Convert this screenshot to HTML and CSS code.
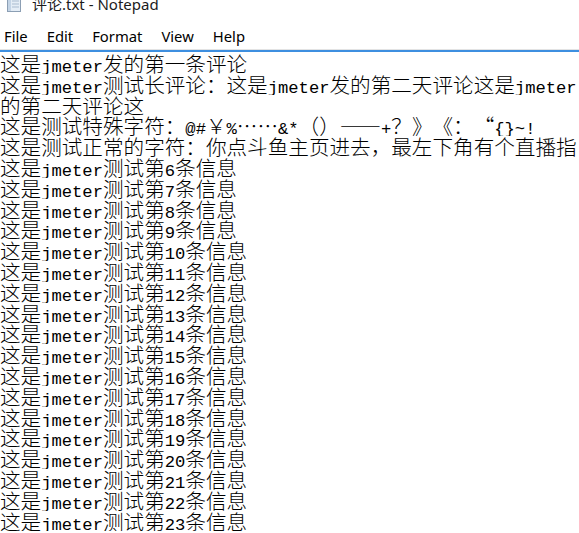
FILE: index.html
```
<!DOCTYPE html>
<html lang="zh-CN">
<head>
<meta charset="utf-8">
<title>评论.txt - Notepad</title>
<link rel="stylesheet" href="styles.css">
</head>
<body>
<div class="window">
  <div class="titlebar">
    <svg class="app-icon" width="18" height="18" viewBox="0 0 18 18">
      <rect x="2.5" y="1.5" width="13" height="15" fill="#e4edf6" stroke="#8c9fb4"/>
      <rect x="3" y="2" width="3" height="14" fill="#c3d4e6"/>
      <line x1="7" y1="6" x2="14" y2="6" stroke="#a9bbcf"/>
      <line x1="7" y1="9" x2="14" y2="9" stroke="#a9bbcf"/>
      <line x1="7" y1="12" x2="14" y2="12" stroke="#a9bbcf"/>
    </svg>
    <span class="title">评论.txt - Notepad</span>
  </div>
  <div class="menubar">
    <span class="menu">File</span>
    <span class="menu">Edit</span>
    <span class="menu">Format</span>
    <span class="menu">View</span>
    <span class="menu">Help</span>
  </div>
  <div class="editor">
    <div class="ln">这是<span class="l">jmeter</span>发的第一条评论</div>
    <div class="ln">这是<span class="l">jmeter</span>测试长评论：这是<span class="l">jmeter</span>发的第二天评论这是<span class="l">jmeter</span></div>
    <div class="ln">的第二天评论这</div>
    <div class="ln">这是测试特殊字符：<span class="l">@#</span>￥<span class="l">%</span>……<span class="l">&amp;*</span>（）——<span class="l">+</span><span class="fw">？</span><span class="fw">》</span><span class="fw">《</span><span class="fw">：</span><span class="fw fr">“</span><span class="l">{}~!</span></div>
    <div class="ln">这是测试正常的字符：你点斗鱼主页进去，最左下角有个直播指</div>
    <div class="ln">这是<span class="l">jmeter</span>测试第<span class="l">6</span>条信息</div>
    <div class="ln">这是<span class="l">jmeter</span>测试第<span class="l">7</span>条信息</div>
    <div class="ln">这是<span class="l">jmeter</span>测试第<span class="l">8</span>条信息</div>
    <div class="ln">这是<span class="l">jmeter</span>测试第<span class="l">9</span>条信息</div>
    <div class="ln">这是<span class="l">jmeter</span>测试第<span class="l">10</span>条信息</div>
    <div class="ln">这是<span class="l">jmeter</span>测试第<span class="l">11</span>条信息</div>
    <div class="ln">这是<span class="l">jmeter</span>测试第<span class="l">12</span>条信息</div>
    <div class="ln">这是<span class="l">jmeter</span>测试第<span class="l">13</span>条信息</div>
    <div class="ln">这是<span class="l">jmeter</span>测试第<span class="l">14</span>条信息</div>
    <div class="ln">这是<span class="l">jmeter</span>测试第<span class="l">15</span>条信息</div>
    <div class="ln">这是<span class="l">jmeter</span>测试第<span class="l">16</span>条信息</div>
    <div class="ln">这是<span class="l">jmeter</span>测试第<span class="l">17</span>条信息</div>
    <div class="ln">这是<span class="l">jmeter</span>测试第<span class="l">18</span>条信息</div>
    <div class="ln">这是<span class="l">jmeter</span>测试第<span class="l">19</span>条信息</div>
    <div class="ln">这是<span class="l">jmeter</span>测试第<span class="l">20</span>条信息</div>
    <div class="ln">这是<span class="l">jmeter</span>测试第<span class="l">21</span>条信息</div>
    <div class="ln">这是<span class="l">jmeter</span>测试第<span class="l">22</span>条信息</div>
    <div class="ln">这是<span class="l">jmeter</span>测试第<span class="l">23</span>条信息</div>
  </div>
</div>
</body>
</html>
```
FILE: styles.css
```
html, body {
  margin: 0;
  padding: 0;
  background: #ffffff;
}

.window {
  width: 579px;
  height: 533px;
  overflow: hidden;
  background: #ffffff;
  display: flex;
  flex-direction: column;
}

.titlebar {
  height: 20px;
  margin-top: -6px;
  display: flex;
  align-items: center;
  gap: 9px;
  padding-left: 5px;
  flex: none;
}

.app-icon {
  display: block;
  flex: none;
}

.title {
  font-family: "Noto Sans", "Noto Sans CJK SC", sans-serif;
  font-size: 15px;
  line-height: 20px;
  color: #1b1b1b;
  white-space: nowrap;
}

.menubar {
  height: 29px;
  margin-top: 6px;
  display: flex;
  align-items: center;
  gap: 19px;
  padding-left: 4px;
  flex: none;
  border-bottom: 1px solid #e3e3e3;
}

.menu {
  font-family: "Noto Sans", "Open Sans", sans-serif;
  font-size: 14.8px;
  line-height: 20px;
  padding-top: 2px;
  color: #000000;
}

.editor {
  border-top: 2px solid #3d8fe0;
  padding-top: 1px;
  flex: 1;
  overflow: hidden;
  font-family: "Noto Sans CJK SC", sans-serif;
  font-weight: 300;
  font-size: 20.6px;
  line-height: 20.8px;
  color: #000000;
}

.ln {
  height: 20.8px;
  white-space: pre;
  overflow: hidden;
}

.l {
  font-family: "Liberation Mono", monospace;
  font-weight: 400;
  font-size: 17.17px;
  line-height: 20.8px;
}

.fw {
  display: inline-block;
  width: 20.6px;
  text-align: center;
}

.fr {
  text-align: right;
}
```
